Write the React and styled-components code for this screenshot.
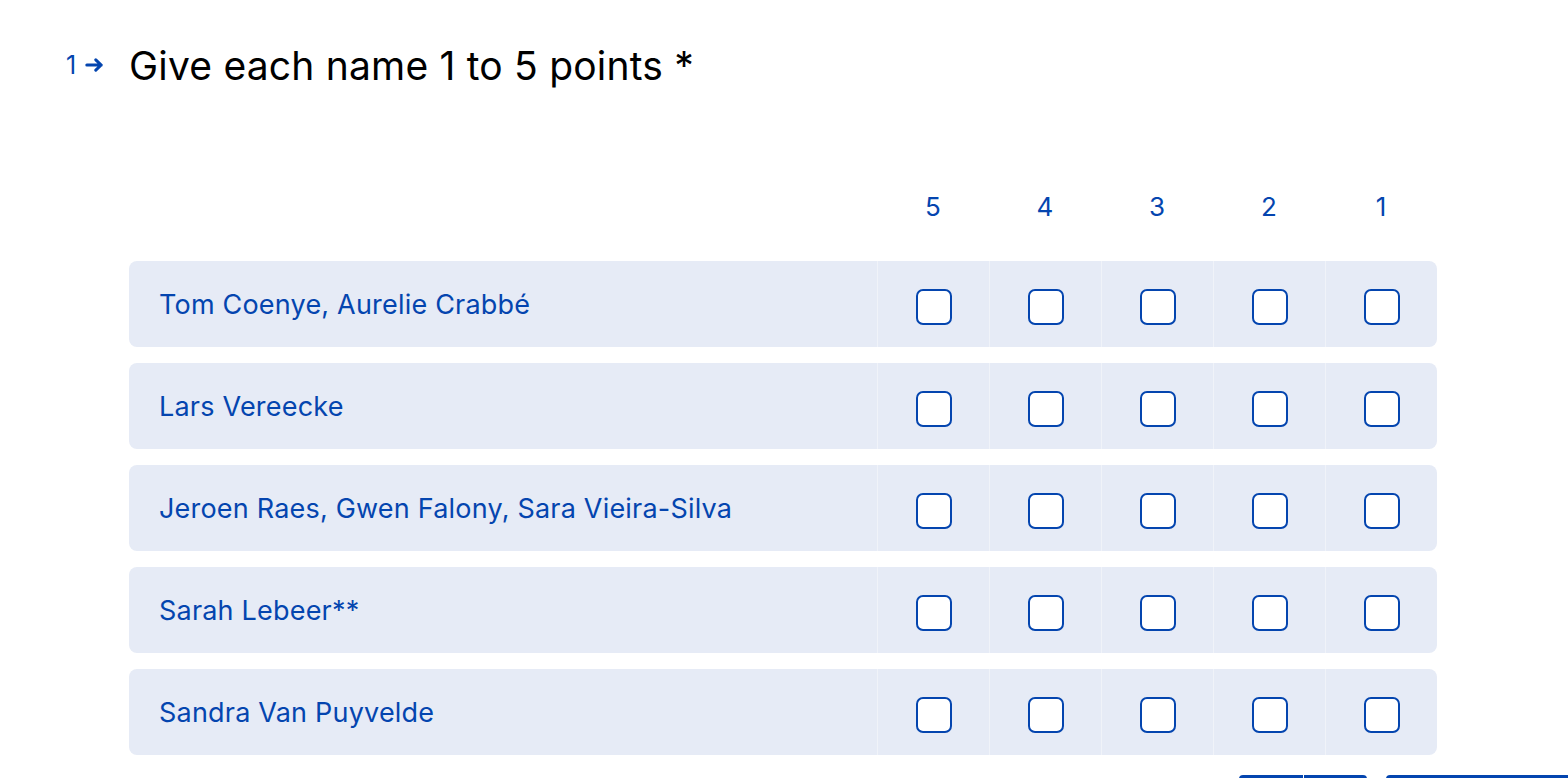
import React from "react";
import styled, { createGlobalStyle } from "styled-components";

const Global = createGlobalStyle`
  html, body { margin: 0; padding: 0; background: #fff; overflow: hidden; height: 778px; }
  body { font-family: Inter, "Noto Sans", sans-serif; -webkit-font-smoothing: antialiased; }
`;

const BLUE = "#0445AF";

const Page = styled.div`
  padding: 44px 0 0 66px;
`;

const QuestionHead = styled.div`
  display: flex;
  align-items: center;
`;

const QNum = styled.div`
  width: 63px;
  display: flex;
  align-items: center;
  gap: 9px;
  color: ${BLUE};
  font-size: 25px;
  line-height: 1;
  margin-top: -2px;
`;

const Title = styled.h1`
  margin: 0;
  font-weight: 400;
  font-size: 39px;
  line-height: 44px;
  color: #000;
  letter-spacing: 0.2px;
`;

const Matrix = styled.div`
  margin-left: 63px;
  width: 1308px;
  margin-top: 94px;
  display: flex;
  flex-direction: column;
  gap: 16px;
`;

const Grid = styled.div`
  display: grid;
  grid-template-columns: 1fr repeat(5, 112px);
`;

const HeaderRow = styled(Grid)`
  height: 48px;
  align-items: center;
  margin-bottom: 15px;
`;

const ColLabel = styled.div`
  text-align: center;
  color: ${BLUE};
  font-size: 26px;
`;

const Row = styled(Grid)`
  height: 86px;
  background: #E6EBF6;
  border-radius: 8px;
`;

const NameCell = styled.div`
  display: flex;
  align-items: center;
  padding-left: 30px;
  color: ${BLUE};
  font-size: 27px;
  letter-spacing: 0.2px;
`;

const BoxCell = styled.div`
  display: flex;
  align-items: center;
  justify-content: center;
  padding-top: 6px;
  border-left: 1px solid rgba(255, 255, 255, 0.4);
`;

const Box = styled.div`
  width: 36px;
  height: 36px;
  box-sizing: border-box;
  border: 2px solid ${BLUE};
  border-radius: 7px;
  background: #fff;
`;

const Footer = styled.div`
  display: flex;
  margin-top: 20px;
  padding-left: 1173px;
  gap: 19px;
`;

const NavGroup = styled.div`
  display: flex;
  flex-shrink: 0;
  gap: 1px;
  border-radius: 4px;
  overflow: hidden;
`;

const NavBtn = styled.div`
  width: 63.5px;
  height: 40px;
  flex-shrink: 0;
  background: ${BLUE};
`;

const SubmitBtn = styled.div`
  width: 220px;
  height: 40px;
  background: ${BLUE};
  border-radius: 4px;
  flex-shrink: 0;
`;

const names = [
  "Tom Coenye, Aurelie Crabbé",
  "Lars Vereecke",
  "Jeroen Raes, Gwen Falony, Sara Vieira-Silva",
  "Sarah Lebeer**",
  "Sandra Van Puyvelde",
];

const cols = [5, 4, 3, 2, 1];

export default function App() {
  return (
    <>
      <Global />
      <Page>
        <QuestionHead>
          <QNum>
            <span>1</span>
            <svg width="19" height="14" viewBox="0 0 19 14" fill="none">
              <path d="M1.8 7h14.5M10.8 1.8L16.2 7l-5.4 5.2" stroke={BLUE} strokeWidth="3" strokeLinecap="round" strokeLinejoin="round" />
            </svg>
          </QNum>
          <Title>Give each name 1 to 5 points *</Title>
        </QuestionHead>
        <Matrix>
          <HeaderRow>
            <div />
            {cols.map((c) => (
              <ColLabel key={c}>{c}</ColLabel>
            ))}
          </HeaderRow>
          {names.map((n) => (
            <Row key={n}>
              <NameCell>{n}</NameCell>
              {cols.map((c) => (
                <BoxCell key={c}>
                  <Box />
                </BoxCell>
              ))}
            </Row>
          ))}
        </Matrix>
        <Footer>
          <NavGroup>
            <NavBtn />
            <NavBtn />
          </NavGroup>
          <SubmitBtn />
        </Footer>
      </Page>
    </>
  );
}
